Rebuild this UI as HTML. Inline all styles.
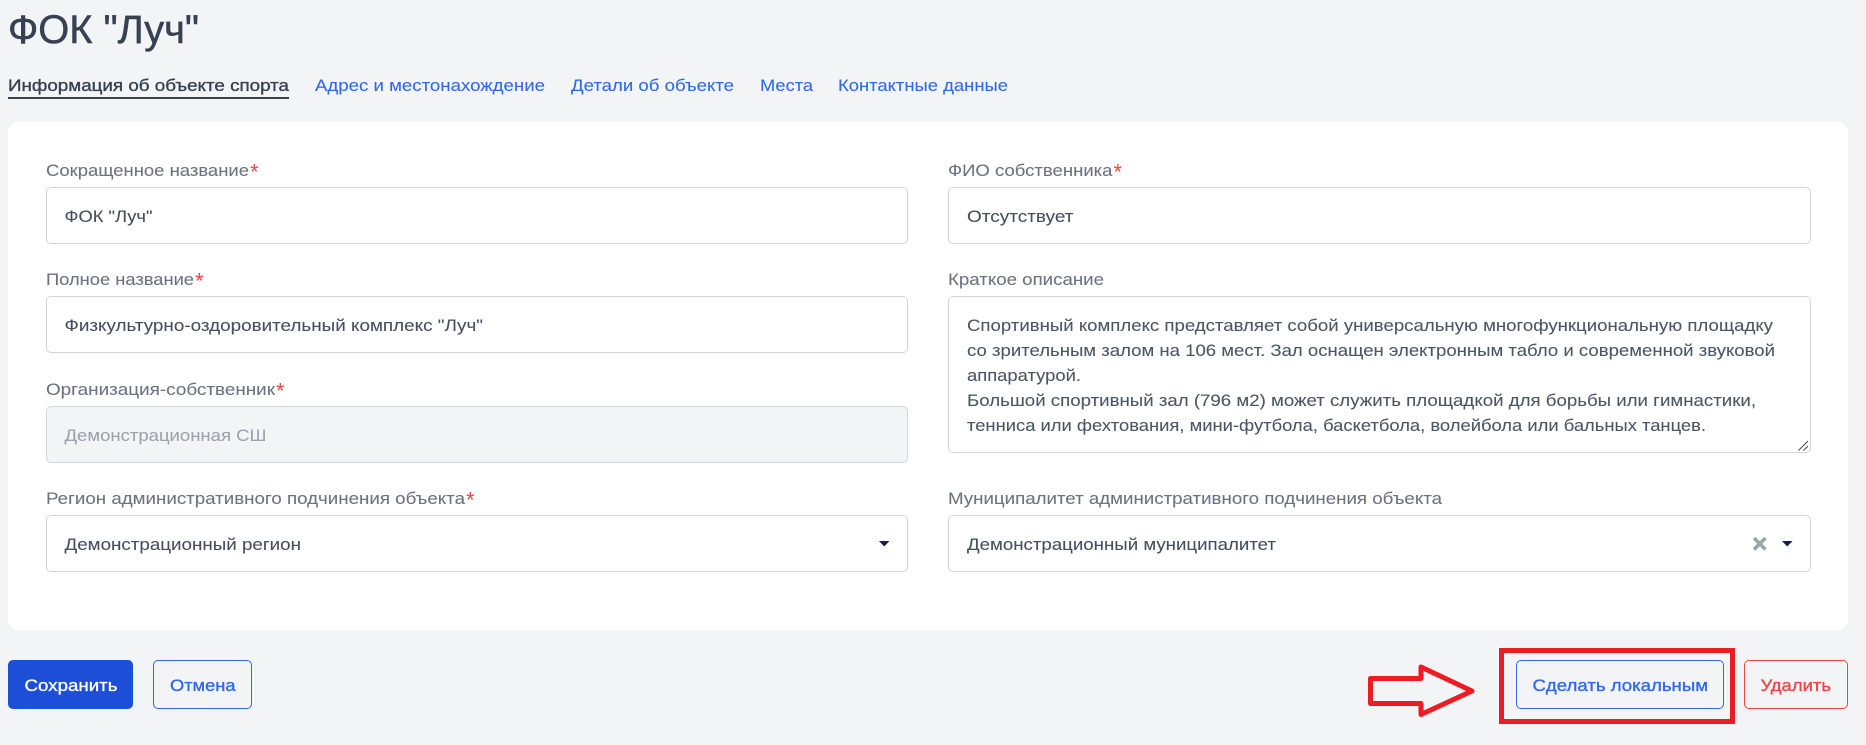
<!DOCTYPE html>
<html lang="ru">
<head>
<meta charset="utf-8">
<title>ФОК "Луч"</title>
<style>
html,body{margin:0;padding:0;width:1866px;height:745px;overflow:hidden;background:#f3f4f6}
body{position:relative;font-family:"Liberation Sans",sans-serif}
.b{position:absolute;box-sizing:border-box}
.card{left:8px;top:122px;width:1840px;height:508px;background:#fff;border-radius:10px}
.f{background:#fff;border:1px solid #d1d5db;border-radius:5px}
.l{left:46px;width:862px}
.r{left:948px;width:863px}
.btn{top:660px;height:49px;border-radius:5px;border:1px solid #2f68ee}
svg{position:absolute;left:0;top:0}
text{font-family:"Liberation Sans",sans-serif;font-size:17px;fill:#454e5e;stroke:#454e5e;stroke-width:.08px}
.lb{fill:#6b7280;stroke:#6b7280}
.as{fill:#ef4444;stroke:none;font-size:22px}
.tab{fill:#2f68ee;stroke:#2f68ee}
.ta{fill:#4b5563;stroke:#4b5563}
.m{stroke-width:.35px}
.act{fill:#374151;stroke:#374151}
.ttl{font-size:39.5px;stroke-width:.5px;fill:#374151;stroke:#374151}
</style>
</head>
<body>
<div class="b card"></div>
<div class="b f l" style="top:187px;height:57px"></div>
<div class="b f l" style="top:296px;height:57px"></div>
<div class="b f l" style="top:406px;height:57px;background:#f3f4f6"></div>
<div class="b f l" style="top:515px;height:57px"></div>
<div class="b f r" style="top:187px;height:57px"></div>
<div class="b f r" style="top:296px;height:157px"></div>
<div class="b f r" style="top:515px;height:57px"></div>
<div class="b" style="left:8px;top:97px;width:281px;height:2px;background:#374151"></div>
<div class="b btn" style="left:8px;width:125px;background:#1d4ed8;border-color:#1d4ed8"></div>
<div class="b btn" style="left:153px;width:99px"></div>
<div class="b btn" style="left:1516px;width:208px"></div>
<div class="b btn" style="left:1744px;width:104px;border-color:#ef4444"></div>
<div class="b" style="left:1499px;top:648px;width:236px;height:76px;border:5px solid #ed1c24"></div>

<svg width="1866" height="745" viewBox="0 0 1866 745" xmlns="http://www.w3.org/2000/svg">
<text x="8" y="43" textLength="191" lengthAdjust="spacingAndGlyphs" class="ttl">ФОК "Луч"</text>

<text x="8" y="91" textLength="281" lengthAdjust="spacingAndGlyphs" class="m act">Информация об объекте спорта</text>
<text x="315" y="91" textLength="230" lengthAdjust="spacingAndGlyphs" class="tab">Адрес и местонахождение</text>
<text x="571" y="91" textLength="163" lengthAdjust="spacingAndGlyphs" class="tab">Детали об объекте</text>
<text x="760" y="91" textLength="53" lengthAdjust="spacingAndGlyphs" class="tab">Места</text>
<text x="838" y="91" textLength="170" lengthAdjust="spacingAndGlyphs" class="tab">Контактные данные</text>

<text x="46" y="176" textLength="203" lengthAdjust="spacingAndGlyphs" class="lb">Сокращенное название</text>
<text x="250" y="179.5" class="as">*</text>
<text x="64.5" y="222" textLength="88" lengthAdjust="spacingAndGlyphs">ФОК "Луч"</text>

<text x="46" y="285" textLength="148" lengthAdjust="spacingAndGlyphs" class="lb">Полное название</text>
<text x="195" y="288.5" class="as">*</text>
<text x="64.5" y="331" textLength="418.5" lengthAdjust="spacingAndGlyphs">Физкультурно-оздоровительный комплекс "Луч"</text>

<text x="46" y="395" textLength="229" lengthAdjust="spacingAndGlyphs" class="lb">Организация-собственник</text>
<text x="276" y="398.5" class="as">*</text>
<text x="64.5" y="441" textLength="202" lengthAdjust="spacingAndGlyphs" style="fill:#9ca3af;stroke:#9ca3af">Демонстрационная СШ</text>

<text x="46" y="504" textLength="419" lengthAdjust="spacingAndGlyphs" class="lb">Регион административного подчинения объекта</text>
<text x="466" y="507.5" class="as">*</text>
<text x="64.5" y="550" textLength="236.5" lengthAdjust="spacingAndGlyphs">Демонстрационный регион</text>

<text x="948" y="176" textLength="164.5" lengthAdjust="spacingAndGlyphs" class="lb">ФИО собственника</text>
<text x="1113.5" y="179.5" class="as">*</text>
<text x="967" y="222" textLength="106.5" lengthAdjust="spacingAndGlyphs">Отсутствует</text>

<text x="948" y="285" textLength="156" lengthAdjust="spacingAndGlyphs" class="lb">Краткое описание</text>
<text x="967" y="331" textLength="806" lengthAdjust="spacingAndGlyphs" class="ta">Спортивный комплекс представляет собой универсальную многофункциональную площадку</text>
<text x="967" y="356" textLength="808" lengthAdjust="spacingAndGlyphs" class="ta">со зрительным залом на 106 мест. Зал оснащен электронным табло и современной звуковой</text>
<text x="967" y="381" textLength="114" lengthAdjust="spacingAndGlyphs" class="ta">аппаратурой.</text>
<text x="967" y="406" textLength="789" lengthAdjust="spacingAndGlyphs" class="ta">Большой спортивный зал (796 м2) может служить площадкой для борьбы или гимнастики,</text>
<text x="967" y="431" textLength="739" lengthAdjust="spacingAndGlyphs" class="ta">тенниса или фехтования, мини-футбола, баскетбола, волейбола или бальных танцев.</text>

<text x="948" y="504" textLength="494" lengthAdjust="spacingAndGlyphs" class="lb">Муниципалитет административного подчинения объекта</text>
<text x="967" y="550" textLength="309" lengthAdjust="spacingAndGlyphs">Демонстрационный муниципалитет</text>

<text x="24.5" y="691" textLength="93" lengthAdjust="spacingAndGlyphs" class="m" style="fill:#fff;stroke:#fff">Сохранить</text>
<text x="170" y="691" textLength="65.5" lengthAdjust="spacingAndGlyphs" class="tab m">Отмена</text>
<text x="1532.5" y="691" textLength="175.5" lengthAdjust="spacingAndGlyphs" class="tab m">Сделать локальным</text>
<text x="1760.5" y="691" textLength="70.5" lengthAdjust="spacingAndGlyphs" class="m" style="fill:#ef4444;stroke:#ef4444">Удалить</text>

<!-- carets -->
<path d="M879 541H889.5L884.2 546.5Z" fill="#111f4d"/>
<path d="M1782 541H1792.5L1787.2 546.5Z" fill="#111f4d"/>
<!-- clear x -->
<path d="M1754 538L1765.5 549.5M1765.5 538L1754 549.5" stroke="#9ca3af" stroke-width="3.6" fill="none"/>
<!-- textarea resize grip -->
<path d="M1798.5 450.5L1808 441M1803.5 450.5L1808 446" stroke="#555" stroke-width="1.2" fill="none"/>
<!-- arrow -->
<path d="M1370.5 678.5H1421V667L1472 691L1421 714.5V703.5H1370.5Z" fill="none" stroke="#ed1c24" stroke-width="5" stroke-linejoin="round"/>
</svg>
</body>
</html>
